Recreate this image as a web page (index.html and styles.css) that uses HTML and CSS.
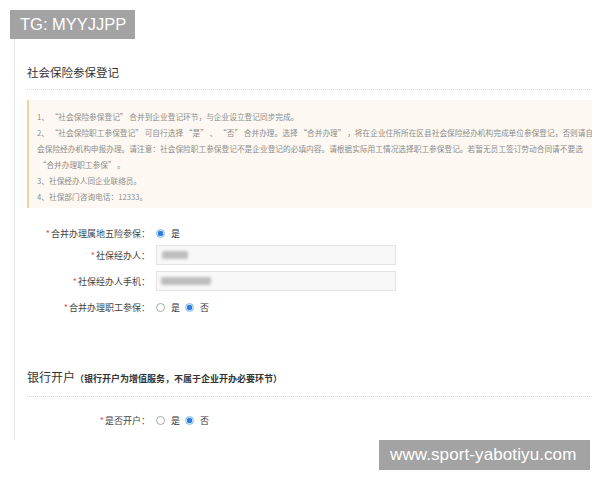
FILE: index.html
```html
<!DOCTYPE html>
<html lang="zh-CN">
<head>
<meta charset="utf-8">
<title>社会保险参保登记</title>
<link rel="stylesheet" href="styles.css">
</head>
<body>
<div class="page">
  <div class="panel">
    <div class="sec-head">社会保险参保登记</div>
    <div class="notice">
      <div class="nline">1、 “社会保险参保登记” 合并到企业登记环节，与企业设立登记同步完成。</div>
      <div class="nline">2、 “社会保险职工参保登记” 可自行选择 “是” 、 “否” 合并办理。选择 “合并办理” ，将在企业住所所在区县社会保险经办机构完成单位参保登记，否则请自行</div>
      <div class="nline">会保险经办机构申报办理。请注意：社会保险职工参保登记不是企业登记的必填内容。请根据实际用工情况选择职工参保登记。若暂无员工签订劳动合同请不要选</div>
      <div class="nline"> “合并办理职工参保” 。</div>
      <div class="nline">3、社保经办人同企业联络员。</div>
      <div class="nline">4、社保部门咨询电话：12333。</div>
    </div>
    <div class="form">
      <div class="row row-first">
        <div class="label"><span class="req">*</span>合并办理属地五险参保：</div>
        <div class="ctrl">
          <span class="opt"><span class="radio on"></span>是</span>
        </div>
      </div>
      <div class="row">
        <div class="label"><span class="req">*</span>社保经办人：</div>
        <div class="ctrl"><div class="input"><span class="blur b1"></span></div></div>
      </div>
      <div class="row">
        <div class="label"><span class="req">*</span>社保经办人手机：</div>
        <div class="ctrl"><div class="input"><span class="blur b2"></span></div></div>
      </div>
      <div class="row">
        <div class="label"><span class="req">*</span>合并办理职工参保：</div>
        <div class="ctrl">
          <span class="opt"><span class="radio"></span>是</span>
          <span class="opt"><span class="radio on"></span>否</span>
        </div>
      </div>
    </div>
    <div class="sec-head sec-two">银行开户<span class="sub">（银行开户为增值服务，不属于企业开办必要环节）</span></div>
    <div class="form form-two">
      <div class="row">
        <div class="label"><span class="req">*</span>是否开户：</div>
        <div class="ctrl">
          <span class="opt"><span class="radio"></span>是</span>
          <span class="opt"><span class="radio on"></span>否</span>
        </div>
      </div>
    </div>
  </div>
</div>
<div class="tag tag-tg">TG: MYYJJPP</div>
<div class="tag tag-url">www.sport-yabotiyu.com</div>
</body>
</html>
```
FILE: styles.css
```css
html, body {
  margin: 0;
  padding: 0;
  background: #ffffff;
  overflow: hidden;
  width: 600px;
  height: 480px;
}
body {
  font-family: "Noto Sans CJK SC", "Liberation Sans", sans-serif;
  color: #333;
  position: relative;
}
.page {
  padding-top: 39px;
  padding-left: 14px;
}
.panel {
  box-sizing: border-box;
  height: 401px;
  border-left: 1px solid #e4e4e4;
  padding-left: 12px;
  padding-right: 8px;
}
.sec-head {
  padding: 25px 0 9px;
  font-size: 11.5px;
  line-height: 16px;
  color: #333;
  border-bottom: 1px dotted #d6d6d6;
  white-space: nowrap;
}
.sec-two {
  margin-top: 27px;
  font-size: 12px;
}
.sub {
  font-size: 9px;
  font-weight: bold;
  color: #333;
}
.notice {
  margin-top: 10px;
  background: #fdf9f2;
  border-left: 2px solid #efd59a;
  padding: 9px 0 3px 8px;
  overflow: hidden;
}
.nline {
  font-size: 7.7px;
  line-height: 16px;
  color: #8c8c8c;
  white-space: pre;
  overflow: hidden;
}
.form {
  margin-top: 15px;
}
.form-two {
  margin-top: 13px;
}
.row {
  display: flex;
  align-items: center;
  height: 20px;
  margin-bottom: 6px;
}
.row-first {
  margin-bottom: 2px;
}
.label {
  box-sizing: border-box;
  width: 125px;
  padding-right: 2px;
  text-align: right;
  font-size: 9px;
  color: #444;
  white-space: nowrap;
}
.req {
  color: #e8504c;
  margin-right: 1px;
}
.ctrl {
  margin-left: 4px;
  display: flex;
  align-items: center;
  gap: 5px;
  font-size: 9px;
  color: #333;
}
.opt {
  display: flex;
  align-items: center;
  gap: 6px;
}
.radio {
  box-sizing: border-box;
  width: 9px;
  height: 9px;
  border-radius: 50%;
  border: 1px solid #a8a8a8;
  background: #fff;
  display: inline-block;
}
.radio.on {
  border-color: #86b6ee;
  background: radial-gradient(circle, #2d7ddf 0 2.6px, #d9e8fa 3px);
}
.input {
  box-sizing: border-box;
  width: 240px;
  height: 20px;
  border: 1px solid #e2e2e2;
  background: #f8f8f8;
  display: flex;
  align-items: center;
  padding-left: 5px;
}
.blur {
  display: inline-block;
  height: 8px;
  background: #bdbdbd;
  filter: blur(1.5px);
  border-radius: 2px;
}
.b1 { width: 26px; }
.b2 { width: 50px; margin-left: -1px; }
.tag {
  position: absolute;
  background: #a3a3a3;
  color: #fff;
  font-family: "Liberation Sans", Arial, sans-serif;
  white-space: nowrap;
  box-sizing: border-box;
}
.tag-tg {
  left: 10px;
  top: 10px;
  width: 125px;
  height: 29px;
  line-height: 29px;
  font-size: 16.5px;
  padding-left: 10px;
}
.tag-url {
  left: 379px;
  top: 440px;
  width: 211px;
  height: 30px;
  line-height: 30px;
  font-size: 17px;
  padding-left: 11px;
  letter-spacing: 0.1px;
}
```
